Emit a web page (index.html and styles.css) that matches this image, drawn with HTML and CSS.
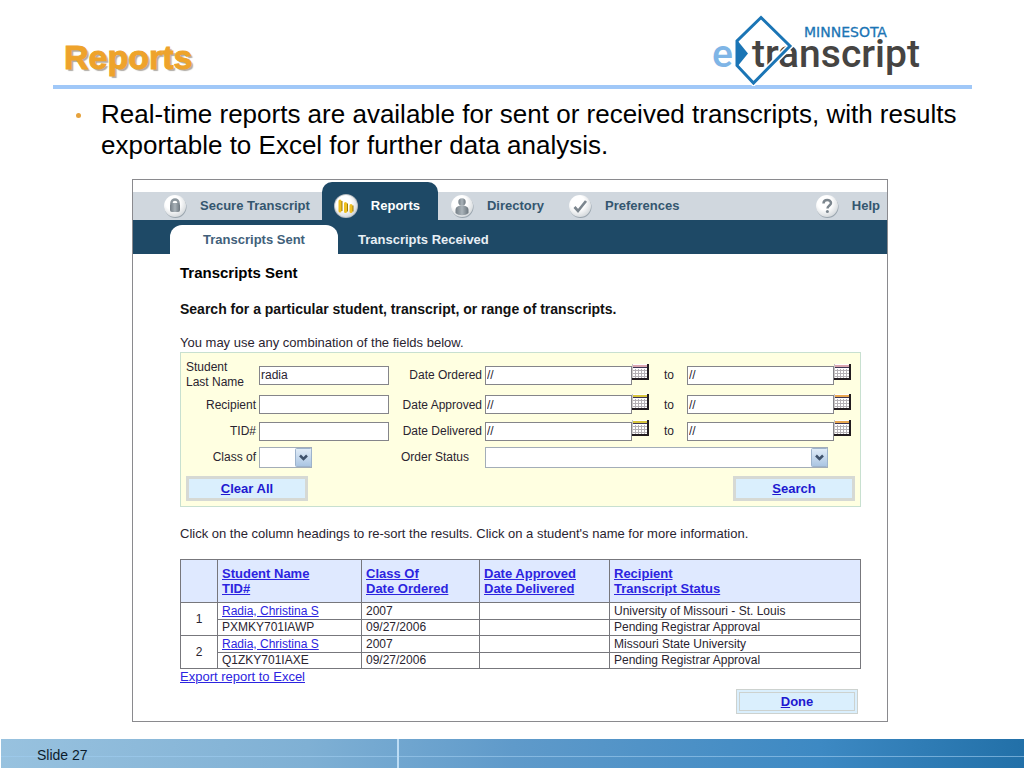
FILE: index.html
```html
<!DOCTYPE html>
<html lang="en">
<head>
  <meta charset="utf-8">
  <title>Reports</title>
  <link rel="stylesheet" href="styles.css">
</head>
<body>
  <!-- shared icons -->
  <svg class="defs" aria-hidden="true">
    <defs>
      <radialGradient id="ball" cx="40%" cy="35%" r="65%">
        <stop offset="0.5" stop-color="#ffffff"/>
        <stop offset="1" stop-color="#d8dcdf"/>
      </radialGradient>
      <linearGradient id="steel" x1="0" x2="1">
        <stop offset="0" stop-color="#747e86"/>
        <stop offset="0.5" stop-color="#aab3b9"/>
        <stop offset="1" stop-color="#6c767e"/>
      </linearGradient>
      <linearGradient id="arrow" x1="0" x2="0" y1="0" y2="1">
        <stop offset="0" stop-color="#e2edf8"/>
        <stop offset="1" stop-color="#a9c4e2"/>
      </linearGradient>
    </defs>
    <symbol id="calendar" viewBox="0 0 17 16">
      <rect width="17" height="16" fill="#221c20"/>
      <rect width="15" height="14" fill="#c9c5c5"/>
      <rect x="1" y="0" width="14" height="14" fill="#fff"/>
      <rect x="1" y="1" width="14" height="2" fill="currentColor"/>
      <rect x="1" y="3" width="14" height="1" fill="#3d3554"/>
      <path d="M1 6.500h14M1 9.500h14M1 12.500h14M3.500 5v9M6.500 5v9M9.500 5v9M12.500 5v9" stroke="#b5b1b6" fill="none"/>
    </symbol>
    <symbol id="chevron" viewBox="0 0 17 19">
      <rect x="0.500" y="0.500" width="16" height="18" rx="1" fill="url(#arrow)" stroke="#9db3cc"/>
      <path d="M5 7.500l3.500 3.500L12 7.500" fill="none" stroke="#3f526b" stroke-width="2.500"/>
    </symbol>
  </svg>

  <header class="header">
    <h1 class="title">Reports</h1>
    <svg class="logo" viewBox="0 0 210 72" role="img" aria-label="Minnesota e-transcript">
      <text class="logo-e" x="0" y="53">e</text>
      <text class="logo-word" x="40" y="53">transcript</text>
      <text class="logo-state" x="92" y="23">MINNESOTA</text>
      <path d="M49 3.500L78 32 41.500 69 25 51.500V27z" fill="none" stroke="#fff" stroke-width="6"/>
      <path d="M49 3.500L78 32 41.500 69 25 51.500V27z" fill="none" stroke="#1b75b5" stroke-width="3"/>
      <path d="M25 26l11 13.500L25 53z" fill="#1b75b5"/>
    </svg>
  </header>

  <main class="slide">
    <ul class="bullets">
      <li>Real-time reports are available for sent or received transcripts, with results exportable to Excel for further data analysis.</li>
    </ul>

    <section class="app">
      <nav class="nav">
        <a class="nav-item" href="#">
          <svg class="nav-icon" viewBox="0 0 24 24"><circle cx="12.500" cy="13" r="11" fill="#9aa5ae"/><circle cx="12" cy="12" r="11" fill="url(#ball)"/><path d="M8.500 10V8.500a3.500 3 0 017 0V10" fill="none" stroke="#8d979e" stroke-width="2.500"/><rect x="7" y="9" width="10" height="9" rx="2" fill="url(#steel)"/></svg>
          Secure Transcript
        </a>
        <a class="nav-item active" href="#">
          <svg class="nav-icon" viewBox="0 0 24 24"><circle cx="12" cy="12" r="12" fill="#b9bec2"/><circle cx="12" cy="12" r="11" fill="url(#ball)"/><path d="M7 7v10M12.500 9.500v8M18 11.500v6" stroke="#9b7a10" stroke-width="3"/><path d="M6 7v10M11.500 9.500v8M17 11.500v6" stroke="#efc021" stroke-width="3" stroke-linecap="round"/></svg>
          Reports
        </a>
        <a class="nav-item" href="#">
          <svg class="nav-icon" viewBox="0 0 24 24"><circle cx="12.500" cy="13" r="11" fill="#9aa5ae"/><circle cx="12" cy="12" r="11" fill="url(#ball)"/><circle cx="12" cy="8" r="3.700" fill="url(#steel)"/><path d="M5.500 19v-3c0-3 2.500-4.500 6.500-4.500s6.500 1.500 6.500 4.500v3c-3 3-10 3-13 0z" fill="url(#steel)"/></svg>
          Directory
        </a>
        <a class="nav-item" href="#">
          <svg class="nav-icon" viewBox="0 0 24 24"><circle cx="12.500" cy="13" r="11" fill="#9aa5ae"/><circle cx="12" cy="12" r="11" fill="url(#ball)"/><path d="M6.500 13l3.500 4L18 7" fill="none" stroke="#7c868e" stroke-width="2.700"/></svg>
          Preferences
        </a>
        <a class="nav-item help" href="#">
          <svg class="nav-icon" viewBox="0 0 24 24"><circle cx="12.500" cy="13" r="11" fill="#9aa5ae"/><circle cx="12" cy="12" r="11" fill="url(#ball)"/><path d="M8.500 9.500c0-5 7.500-4.500 7.500-.5 0 2.500-3.500 2.500-3.500 5.500" fill="none" stroke="#7c868e" stroke-width="2.500"/><circle cx="12.400" cy="17.500" r="1.500" fill="#7c868e"/></svg>
          Help
        </a>
      </nav>
      <nav class="subnav">
        <a class="tab active" href="#">Transcripts Sent</a>
        <a class="tab" href="#">Transcripts Received</a>
      </nav>

      <div class="content">
        <h2>Transcripts Sent</h2>
        <h3>Search for a particular student, transcript, or range of transcripts.</h3>
        <p>You may use any combination of the fields below.</p>

        <form class="search">
          <div class="fields">
            <label class="name-label" for="last-name">Student<br>Last Name</label>
            <input type="text" id="last-name" value="radia">
            <label for="ordered-from">Date Ordered</label>
            <input type="text" id="ordered-from" value="//">
            <div class="pick">
              <button type="button" class="cal pink" aria-label="Pick date"><svg><use href="#calendar"/></svg></button>
              <label for="ordered-to">to</label>
            </div>
            <input type="text" id="ordered-to" value="//">
            <div class="pick"><button type="button" class="cal pink" aria-label="Pick date"><svg><use href="#calendar"/></svg></button></div>

            <label for="recipient">Recipient</label>
            <input type="text" id="recipient">
            <label for="approved-from">Date Approved</label>
            <input type="text" id="approved-from" value="//">
            <div class="pick">
              <button type="button" class="cal yellow" aria-label="Pick date"><svg><use href="#calendar"/></svg></button>
              <label for="approved-to">to</label>
            </div>
            <input type="text" id="approved-to" value="//">
            <div class="pick"><button type="button" class="cal" aria-label="Pick date"><svg><use href="#calendar"/></svg></button></div>

            <label for="tid">TID#</label>
            <input type="text" id="tid">
            <label for="delivered-from">Date Delivered</label>
            <input type="text" id="delivered-from" value="//">
            <div class="pick">
              <button type="button" class="cal yellow" aria-label="Pick date"><svg><use href="#calendar"/></svg></button>
              <label for="delivered-to">to</label>
            </div>
            <input type="text" id="delivered-to" value="//">
            <div class="pick"><button type="button" class="cal" aria-label="Pick date"><svg><use href="#calendar"/></svg></button></div>

            <label for="class-of">Class of</label>
            <div class="select class-select">
              <select id="class-of"><option></option></select>
              <svg><use href="#chevron"/></svg>
            </div>
            <label class="status-label" for="status">Order Status</label>
            <div class="select status-select">
              <select id="status"><option></option></select>
              <svg><use href="#chevron"/></svg>
            </div>
          </div>
          <div class="buttons">
            <button type="reset" class="btn"><u>C</u>lear All</button>
            <button type="submit" class="btn"><u>S</u>earch</button>
          </div>
        </form>

        <p class="hint">Click on the column headings to re-sort the results. Click on a student's name for more information.</p>

        <table class="results">
          <colgroup>
            <col class="col-num"><col class="col-name"><col class="col-class"><col class="col-date"><col>
          </colgroup>
          <thead>
            <tr>
              <th></th>
              <th><a href="#">Student Name</a><br><a href="#">TID#</a></th>
              <th><a href="#">Class Of</a><br><a href="#">Date Ordered</a></th>
              <th><a href="#">Date Approved</a><br><a href="#">Date Delivered</a></th>
              <th><a href="#">Recipient</a><br><a href="#">Transcript Status</a></th>
            </tr>
          </thead>
          <tbody>
            <tr>
              <td class="num" rowspan="2">1</td>
              <td><a href="#">Radia, Christina S</a></td>
              <td>2007</td>
              <td></td>
              <td>University of Missouri - St. Louis</td>
            </tr>
            <tr>
              <td>PXMKY701IAWP</td>
              <td>09/27/2006</td>
              <td></td>
              <td>Pending Registrar Approval</td>
            </tr>
            <tr>
              <td class="num" rowspan="2">2</td>
              <td><a href="#">Radia, Christina S</a></td>
              <td>2007</td>
              <td></td>
              <td>Missouri State University</td>
            </tr>
            <tr>
              <td>Q1ZKY701IAXE</td>
              <td>09/27/2006</td>
              <td></td>
              <td>Pending Registrar Approval</td>
            </tr>
          </tbody>
        </table>
        <a class="export" href="#">Export report to Excel</a>
        <div class="done">
          <button type="button" class="btn"><u>D</u>one</button>
        </div>
      </div>
    </section>
  </main>

  <footer class="footer">Slide 27</footer>
</body>
</html>
```

FILE: styles.css
```css
* {
  box-sizing: border-box;
}

body {
  display: flex;
  flex-direction: column;
  min-height: 100vh;
  margin: 0;
  background: #fff;
  color: #000;
  font-family: "Liberation Sans", Arial, sans-serif;
}

h1, h2, h3, p, ul {
  margin: 0;
}

.defs {
  position: absolute;
  width: 0;
  height: 0;
}

/* slide heading */
.header {
  display: flex;
  justify-content: space-between;
  align-items: flex-start;
  margin: 0 52px 0 53px;
  padding: 14px 50px 0 11px;
  height: 89px;
  border-bottom: 4px solid #a0c8f8;
}

.title {
  margin-top: 23px;
  font-size: 34px;
  line-height: 40px;
  color: #eea32b;
  -webkit-text-stroke: 1px #eea32b;
  text-shadow: 2px 2px 1px #b0aca6;
}

.logo {
  width: 210px;
  height: 72px;
}

.logo-e,
.logo-word {
  font: 500 39px Roboto, sans-serif;
  fill: #464442;
}

.logo-e {
  fill: #7fb5e6;
}

.logo-state {
  font: 14px "DejaVu Sans", sans-serif;
  fill: #1b75b5;
  stroke: #1b75b5;
  stroke-width: 0.3px;
}

.slide {
  flex: 1;
}

.bullets {
  margin: 10px 52px 0 101px;
  padding: 0;
  list-style: none;
  font-size: 26px;
  line-height: 31px;
}

.bullets li {
  position: relative;
}

.bullets li::before {
  content: "";
  position: absolute;
  left: -25px;
  top: 14px;
  width: 5px;
  height: 5px;
  border-radius: 50%;
  background: #e6a23c;
}

/* application window */
.app {
  margin: 18px 136px 16px 132px;
  border: 1px solid #8a8a8e;
  font-size: 12px;
  line-height: 16px;
  color: #2a2430;
}

.nav {
  display: flex;
  align-items: flex-end;
  height: 28px;
  margin-top: 12px;
  padding-left: 18px;
  background: #d0d7de;
}

.nav-item {
  display: flex;
  align-items: center;
  gap: 15px;
  height: 28px;
  padding: 0 12px;
  font-size: 13px;
  font-weight: bold;
  color: #34566f;
  text-decoration: none;
}

.nav-item.active {
  height: 38px;
  padding: 10px 18px 0 12px;
  border-radius: 10px 10px 0 0;
  background: #1e4966;
  color: #fff;
}

.nav-icon {
  width: 24px;
  height: 24px;
  margin-right: -2px;
}

.nav-item.help {
  margin-left: auto;
  padding-right: 7px;
}

.subnav {
  display: flex;
  align-items: flex-end;
  height: 34px;
  padding-left: 37px;
  background: #1e4966;
}

.tab {
  height: 29px;
  padding: 0 20px;
  font-size: 13px;
  font-weight: bold;
  line-height: 29px;
  color: #e8eff5;
  text-decoration: none;
}

.tab.active {
  width: 168px;
  padding: 0;
  border-radius: 12px 12px 0 0;
  background: #fff;
  color: #41607a;
  text-align: center;
}

.content {
  padding: 10px 26px 7px 47px;
}

.content h2 {
  font-size: 15px;
  line-height: 18px;
  color: #000;
}

.content h3 {
  margin: 18px 0 17px;
  font-size: 14px;
  line-height: 18px;
  color: #111;
}

.content p {
  font-size: 13px;
}

/* search form */
.search {
  margin-top: 1px;
  padding: 6px 5px 5px;
  border: 1px solid #c8e0d0;
  background: #ffffe1;
}

.fields {
  display: grid;
  grid-template-columns: 73px 130px 96px 1fr 55px 1fr 18px;
  grid-template-rows: 32px 27px 26px 26px;
  align-items: center;
  margin-right: 3px;
}

.fields > label {
  padding-right: 3px;
  text-align: right;
}

.fields > .name-label {
  line-height: 15px;
  text-align: left;
}

.fields > .status-label {
  padding-left: 12px;
  text-align: left;
}

.fields input {
  width: 100%;
  height: 19px;
  padding: 0 1px;
  border: 1px solid #85858a;
  background: #fff;
  font: 12px "Liberation Sans", Arial, sans-serif;
  color: #2a2430;
}

.pick {
  display: flex;
  gap: 15px;
  height: 22px;
}

.pick label {
  line-height: 22px;
}

.cal {
  width: 17px;
  height: 16px;
  padding: 0;
  border: 0;
  background: none;
  color: #eaa850;
}

.cal.pink {
  color: #dba6b0;
}

.cal.yellow {
  color: #d8c63c;
}

.cal svg {
  display: block;
  width: 17px;
  height: 16px;
}

.select {
  position: relative;
  height: 21px;
}

.select select {
  display: block;
  width: 100%;
  height: 21px;
  border: 1px solid #a3adb8;
  border-radius: 0;
  background: #fff;
  appearance: none;
}

.select svg {
  position: absolute;
  top: 1px;
  right: 0;
  width: 17px;
  height: 19px;
  pointer-events: none;
}

.class-select {
  width: 53px;
}

.status-select {
  grid-column: 4 / 7;
  margin-right: 6px;
}

.buttons {
  display: flex;
  justify-content: space-between;
  margin-top: 6px;
}

.btn {
  width: 122px;
  height: 25px;
  padding: 0;
  border: 3px solid #d6d9d4;
  background: #daeffd;
  font: bold 13px "Liberation Sans", Arial, sans-serif;
  color: #2018d0;
}

.hint {
  padding: 19px 0 17px;
}

/* results */
.content a {
  color: #2c24e0;
}

.results {
  width: 100%;
  table-layout: fixed;
  border-collapse: collapse;
}

.col-num { width: 37px; }
.col-name { width: 144px; }
.col-class { width: 118px; }
.col-date { width: 130px; }

.results th,
.results td {
  padding: 0 4px;
  border: 1px solid #77777c;
  text-align: left;
}

.results th {
  height: 43px;
  background: #dfe9ff;
  font-size: 13px;
  line-height: 15px;
}

.results td {
  height: 16px;
  line-height: 15px;
}

.results tr:nth-child(odd) td {
  height: 17px;
}

.results .num {
  text-align: center;
}

.export {
  display: block;
  width: fit-content;
  font-size: 13px;
}

.done {
  display: flex;
  justify-content: flex-end;
  margin: 4px 3px 0 0;
}

.done .btn {
  border: 4px double #cdd2cf;
}

.footer {
  height: 29px;
  margin-left: 1px;
  padding-left: 36px;
  background:
    linear-gradient(#bcdcf4, #bcdcf4) 396px 0 / 2px 100% no-repeat,
    linear-gradient(rgba(160, 205, 240, 0.6), rgba(160, 205, 240, 0.6)) 0 17px / 100% 1px no-repeat,
    linear-gradient(90deg, #98c2df, #7fb0d4 30%, #5f9aca 50%, #3d89c3 80%, #2270a8);
  font-size: 14px;
  line-height: 33px;
  color: #0c1c2c;
}
```
